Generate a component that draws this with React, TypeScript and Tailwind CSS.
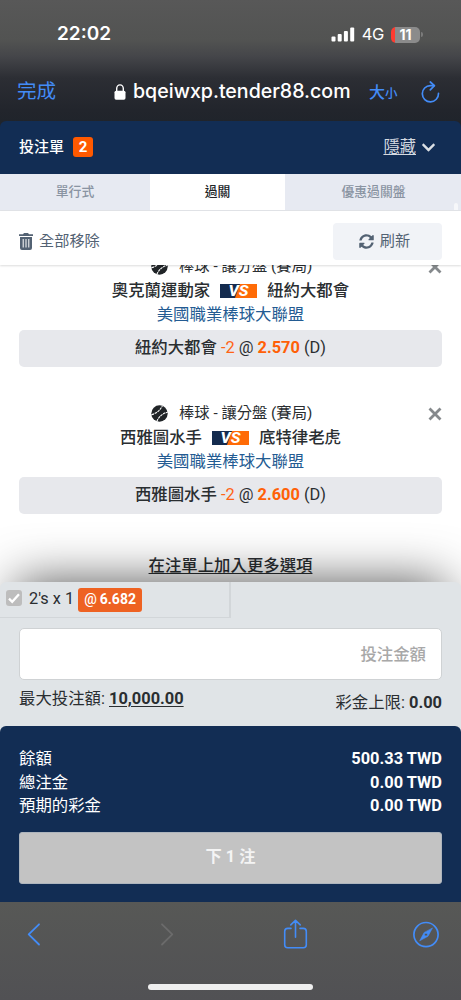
import { FaChevronDown } from "react-icons/fa";

interface Selection {
  home: string;
  away: string;
  pick: string;
  handicap: string;
  odds: string;
}

const selections: Selection[] = [
  { home: "奧克蘭運動家", away: "紐約大都會", pick: "紐約大都會", handicap: "-2", odds: "2.570" },
  { home: "西雅圖水手", away: "底特律老虎", pick: "西雅圖水手", handicap: "-2", odds: "2.600" },
];

const totals = [
  { label: "餘額", value: "500.33 TWD" },
  { label: "總注金", value: "0.00 TWD" },
  { label: "預期的彩金", value: "0.00 TWD" },
];

function StatusBar() {
  return (
    <div className="flex h-[69px] items-center justify-between pl-[57px] pr-[38px] font-['Inter','Noto_Sans_CJK_TC',sans-serif] text-white">
      <span className="text-[19px] font-semibold">22:02</span>
      <div className="flex items-center">
        <svg className="h-[15px] w-[24px]" viewBox="0 0 24 15" fill="#fff">
          <rect x="0.5" y="9.5" width="4" height="5" rx="1" />
          <rect x="6.7" y="7" width="4" height="7.5" rx="1" />
          <rect x="12.9" y="4" width="4" height="10.5" rx="1" />
          <rect x="19.2" y="0.5" width="4" height="14" rx="1" />
        </svg>
        <span className="ml-[7px] text-[16.5px] leading-none tracking-[-0.4px]">4G</span>
        <div className="ml-[7px] flex h-4 w-[29px] items-center justify-center rounded-[5px] bg-[linear-gradient(90deg,#ff3b30_4px,#8b8b8b_4px)]">
          <span className="text-[14px] leading-none font-bold">11</span>
        </div>
        <div className="ml-px h-[5px] w-[2px] rounded-r-full bg-[#7b7b7b]" />
      </div>
    </div>
  );
}

function AddressBar() {
  return (
    <div className="flex h-[46px] items-center pl-[17px] pr-[21px] font-['Inter','Noto_Sans_CJK_TC',sans-serif] text-[#438cf7]">
      <span className="w-[97px] text-[19.5px]">完成</span>
      <svg className="h-4 w-3" viewBox="0 0 12 16">
        <rect x="0.5" y="6.7" width="11" height="9" rx="1.6" fill="#fff" />
        <path d="M2.7 8V4.5a3.3 3.6 0 0 1 6.6 0V8" fill="none" stroke="#fff" strokeWidth="1.4" />
      </svg>
      <span className="ml-[7px] w-[236px] text-[19.6px] font-medium whitespace-nowrap text-white">
        bqeiwxp.tender88.com
      </span>
      <span className="flex items-baseline text-[16px] font-medium">
        大<span className="text-[12.5px]">小</span>
      </span>
      <svg className="ml-auto h-[22px] w-[19px]" viewBox="0 0 19 22" fill="none" stroke="#438cf7" strokeWidth="1.7" strokeLinecap="round" strokeLinejoin="round">
        <path d="M17.5 12.4a8.1 8.1 0 1 1-8.1-7.8h3.8" />
        <path d="M9.3 1l4.1 3.7-4.1 4.1" />
      </svg>
    </div>
  );
}

function BaseballIcon() {
  return (
    <svg className="h-[17px] w-[17px]" viewBox="0 0 17 17" fill="none">
      <circle cx="8.5" cy="8.5" r="8.2" fill="#202427" />
      <g stroke="#fff" strokeWidth="1.1" strokeDasharray="2.6 .7">
        <path d="M.5 9.6C5 8.8 9.3 5.2 11.4.8" />
        <path d="M5.8 16.5C7.7 11.8 11.6 8.3 16.6 7.2" />
      </g>
    </svg>
  );
}

function VersusBadge() {
  return (
    <svg className="mt-px h-[14px] w-[37px]" viewBox="0 0 37 14">
      <rect width="37" height="14" fill="#142b4e" />
      <path d="M20 0h17v14H15z" fill="#ff6b06" />
      <text x="8.5" y="12" textLength="20" lengthAdjust="spacingAndGlyphs" fill="#fff" fontFamily="Roboto, sans-serif" fontSize="14" fontWeight="800" fontStyle="italic">VS</text>
    </svg>
  );
}

function SelectionCard({ selection }: { selection: Selection }) {
  return (
    <div className="h-[147px] shrink-0 px-[19px] text-center text-[16.4px] leading-[24.5px]">
      <div className="flex h-[24.5px] items-center">
        <span className="w-[132px]" />
        <BaseballIcon />
        <span className="ml-[11px] text-[15.3px]">棒球 - 讓分盤 (賽局)</span>
        <svg className="mt-[2px] ml-auto h-[14px] w-[14px]" viewBox="0 0 14 14" stroke="#85898c" strokeWidth="2.8">
          <path d="M1.5 1.5l11 11M12.5 1.5l-11 11" />
        </svg>
      </div>
      <div className="flex h-[24.5px] items-center justify-center gap-[10px] font-medium">
        <span>{selection.home}</span>
        <VersusBadge />
        <span>{selection.away}</span>
      </div>
      <div className="text-[#235b92]">美國職業棒球大聯盟</div>
      <div className="mt-[2px] h-[37px] rounded-[5px] bg-[#e7e8ec] leading-[36px]">
        <span className="font-medium">{selection.pick}</span>{" "}
        <span className="text-[#ff6315]">{selection.handicap}</span> @{" "}
        <b className="text-[#ff6007]">{selection.odds}</b> (D)
      </div>
    </div>
  );
}

function StakePanel() {
  return (
    <div className="relative h-[150px] rounded-t-[6px] bg-[#e0e4e7] shadow-[0_-16px_50px_-16px_rgba(0,0,0,0.68)]">
      <div className="flex h-9 w-[231px] items-center border-r-2 border-b border-[#d2d6d9] pl-[6px]">
        <div className="-mt-[3px] flex h-4 w-4 items-center justify-center rounded-[3px] bg-[#bdbdbd]">
          <svg className="h-3 w-3" viewBox="0 0 12 12" fill="none" stroke="#fff" strokeWidth="2.3">
            <path d="M1 6.7l3.2 3.1L11 2.2" />
          </svg>
        </div>
        <span className="ml-[7px] text-[16.3px]">2's x 1</span>
        <span className="ml-[4px] flex h-6 w-16 items-center justify-center rounded-[3px] bg-[#ee6222] text-[14px] font-bold text-white">
          <span className="mr-[3px] font-medium">@</span>6.682
        </span>
      </div>
      <div className="px-[19px] pt-[10px]">
        <input
          className="block h-[52px] w-full rounded-[5px] border border-[#cfd2d4] bg-white px-[15px] text-right text-[16.4px] font-medium placeholder:text-[#a8a8a8]"
          placeholder="投注金額"
        />
        <div className="flex justify-between pt-[7px] text-[16.4px] leading-6">
          <span>最大投注額: <b className="underline underline-offset-2">10,000.00</b></span>
          <span className="pt-1">彩金上限: <b>0.00</b></span>
        </div>
      </div>
    </div>
  );
}

export default function App() {
  return (
    <div className="flex h-[1000px] w-[461px] flex-col overflow-hidden bg-[#20242b] font-['Roboto','Noto_Sans_CJK_TC',sans-serif] text-[#2a2e31]">
      <header className="h-[121px] shrink-0 bg-[linear-gradient(#585858_0px,#525352_40px,#45464a_56px,#2c2e34_78px,#22252c_110px,#20242b_121px)]">
        <StatusBar />
        <AddressBar />
      </header>

      <div className="flex h-[53px] shrink-0 items-center rounded-t-[6px] bg-[#122d54] px-[19px] pb-px text-white">
        <span className="text-[15px] font-medium">投注單</span>
        <span className="ml-[9px] flex h-5 w-5 items-center justify-center rounded-[3px] bg-[#ff5900] text-[15px] font-bold">2</span>
        <span className="ml-auto text-[16.3px] text-[#d5dae1] underline underline-offset-2">隱藏</span>
        <FaChevronDown className="ml-[5px] mr-[6px] h-[15px] w-[15px] text-[#dce0e5]" />
      </div>

      <nav className="flex h-[37px] shrink-0 border-b border-[#e2e4e8] bg-[#e7eaf2] text-[12.8px] font-medium text-[#8a94a2]">
        <div className="flex w-[150px] items-center justify-center">單行式</div>
        <div className="flex w-[135px] items-center justify-center bg-white text-[#202427]">過關</div>
        <div className="flex flex-1 items-center justify-center pl-px">優惠過關盤</div>
        <div className="-ml-[7px] h-[7px] w-1 self-end rounded-t-full bg-[#f6f7fa] mr-[3px]" />
      </nav>

      <div className="relative z-10 flex h-[54px] shrink-0 items-center justify-between bg-white px-[19px] pt-[7px] text-[15px] text-[#536273] shadow-[0_1px_2px_rgba(0,0,0,0.14)]">
        <div className="flex items-center">
          <svg className="h-[17px] w-[14px]" viewBox="0 0 14 17" fill="#536273">
            <path d="M0 1.2h4L5 0h4l1 1.2h4V3H0zM1 4h12v11a2 2 0 0 1-2 2H3a2 2 0 0 1-2-2z" />
            <path d="M4.2 6v8.5M7 6v8.5M9.8 6v8.5" stroke="#fff" strokeWidth="1" />
          </svg>
          <span className="ml-[6px] text-[15.2px]">全部移除</span>
        </div>
        <button className="flex h-[37px] w-[109px] items-center justify-center rounded-[4px] bg-[#f1f3f7] pr-[6px]">
          <svg className="mr-[6px] h-[15px] w-[15px]" viewBox="0 0 512 512" fill="#536273">
            <path d="M370.72 133.28C339.458 104.008 298.888 87.962 255.848 88c-77.458.068-144.328 53.178-162.791 126.85-1.344 5.363-6.122 9.15-11.651 9.15H24.103c-7.498 0-13.194-6.807-11.807-14.176C33.933 94.924 134.813 8 256 8c66.448 0 126.791 26.136 171.315 68.685L463.03 40.97C478.149 25.851 504 36.559 504 57.941V192c0 13.255-10.745 24-24 24H345.941c-21.382 0-32.09-25.851-16.971-40.971zM32 296h134.059c21.382 0 32.09 25.851 16.971 40.971l-41.75 41.75c31.262 29.273 71.835 45.319 114.876 45.28 77.418-.07 144.315-53.144 162.787-126.849 1.344-5.363 6.122-9.15 11.651-9.15h57.304c7.498 0 13.194 6.807 11.807 14.176C478.067 417.076 377.187 504 256 504c-66.448 0-126.791-26.136-171.315-68.685L48.97 471.03C33.851 486.149 8 475.441 8 454.059V320c0-13.255 10.745-24 24-24z" />
          </svg>
          <span className="text-[15.2px]">刷新</span>
        </button>
      </div>

      <main className="flex h-[317px] shrink-0 flex-col overflow-hidden bg-white">
        <div className="-mt-[11px] flex flex-col">
          {selections.map((selection) => (
            <SelectionCard key={selection.pick} selection={selection} />
          ))}
        </div>
        <div className="pt-[6px] text-center text-[16.4px] leading-6 font-medium underline underline-offset-2">在注單上加入更多選項</div>
      </main>

      <section className="h-[144px] shrink-0 bg-white">
        <StakePanel />
      </section>

      <footer className="relative h-[176px] shrink-0 rounded-t-[6px] bg-[#122d54] px-[19px] pt-[21px] text-white">
        {totals.map((row) => (
          <div key={row.label} className="flex justify-between text-[16.4px] leading-[23.5px]">
            <span>{row.label}</span>
            <b className="font-bold">{row.value}</b>
          </div>
        ))}
        <button className="mt-[14px] h-[52px] w-full rounded-[3px] border border-[#aeb5bd] bg-[#c3c3c3] pb-px text-[16.3px] font-bold text-[#f4f4f4]">下 1 注</button>
      </footer>

      <div className="flex h-[98px] shrink-0 flex-col bg-[linear-gradient(#575856,#515154)]">
        <svg className="h-[68px] w-[461px]" viewBox="0 0 461 68" fill="none" stroke="#438cf7" strokeWidth="1.8" strokeLinecap="round" strokeLinejoin="round">
          <path d="M39 22.3L28.7 32.4 39 42.5" />
          <path d="M162 22.3l10.3 10.1L162 42.5" stroke="#6b6b6b" />
          <path d="M291 26.4h-3.3a3 3 0 0 0-3 3v13.3a3 3 0 0 0 3 3h15.6a3 3 0 0 0 3-3V29.4a3 3 0 0 0-3-3H300M295.5 35.2V18.7M290.8 22.9l4.7-4.5 4.7 4.5" strokeWidth="1.6" />
          <circle cx="426" cy="32.6" r="12.1" strokeWidth="1.7" />
          <path d="M432.3 26.3l-4.3 8-8.3 4.5 4.3-8zM426 31.1a1.5 1.5 0 1 0 0 3 1.5 1.5 0 0 0 0-3z" fill="#438cf7" fillRule="evenodd" strokeWidth=".6" />
        </svg>
        <div className="mx-auto mt-[14px] h-[6px] w-[165px] rounded-full bg-[#efefef]" />
      </div>
    </div>
  );
}
